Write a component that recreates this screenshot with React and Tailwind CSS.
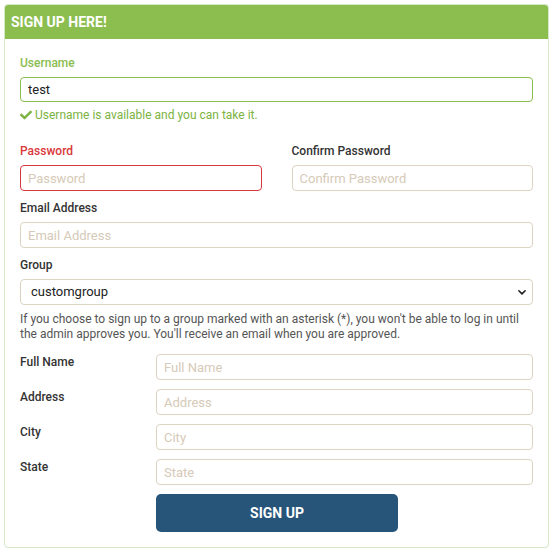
import { useState } from "react";

const font = { fontFamily: "Roboto, 'Liberation Sans', sans-serif" };

function Field({ placeholder, className = "" }) {
  return (
    <input
      type="text"
      placeholder={placeholder}
      className={
        "block w-full h-[26px] rounded-[4px] border border-[#ddd3c3] bg-white px-[7px] text-[13px] text-[#333] placeholder:text-[#d6cab8] outline-none " +
        className
      }
    />
  );
}

function SideRow({ label, placeholder }) {
  return (
    <div className="flex">
      <div className="w-[136px] pt-[1px] text-[12px] font-medium leading-[14px] text-[#333]">
        {label}
      </div>
      <div className="flex-1">
        <Field placeholder={placeholder} />
      </div>
    </div>
  );
}

export default function App() {
  const [username, setUsername] = useState("test");

  return (
    <div className="bg-white p-[4px] pr-[1px]" style={font}>
      <div className="rounded-[4px] border border-[#d3e8c4] bg-white">
        <div className="flex h-[34px] items-center rounded-t-[3px] bg-[#8bbd4f] px-[6px]">
          <span className="text-[14px] font-bold text-white">SIGN UP HERE!</span>
        </div>

        <div className="px-[15px] pt-[17px] pb-[15px]">
          <label className="block text-[12px] font-medium leading-[14px] text-[#8bbd4f]">
            Username
          </label>
          <input
            type="text"
            value={username}
            onChange={(e) => setUsername(e.target.value)}
            className="mt-[7px] block w-full h-[25px] rounded-[4px] border border-[#8bbd4f] bg-white px-[7px] text-[13px] text-[#222] outline-none"
          />
          <div className="mt-[6px] flex items-center text-[12px] leading-[14px] text-[#7cb342]">
            <svg viewBox="0 0 512 512" className="mr-[3px] h-[12px] w-[12px] fill-[#7cb342]">
              <path d="M173.898 439.404l-166.4-166.4c-9.997-9.997-9.997-26.206 0-36.204l36.203-36.204c9.997-9.998 26.207-9.998 36.204 0L192 312.69 432.095 72.596c9.997-9.997 26.207-9.997 36.204 0l36.203 36.204c9.997 9.997 9.997 26.206 0 36.204l-294.4 294.401c-9.998 9.997-26.207 9.997-36.204-.001z" />
            </svg>
            Username is available and you can take it.
          </div>

          <div className="mt-[22px] grid grid-cols-2 gap-x-[30px]">
            <div>
              <label className="block text-[12px] font-medium leading-[14px] text-[#d9383a]">
                Password
              </label>
              <Field
                placeholder="Password"
                className="mt-[7px] !border-[#d9383a]"
              />
            </div>
            <div>
              <label className="block text-[12px] font-medium leading-[14px] text-[#333]">
                Confirm Password
              </label>
              <Field placeholder="Confirm Password" className="mt-[7px]" />
            </div>
          </div>

          <label className="mt-[10px] block text-[12px] font-medium leading-[14px] text-[#333]">
            Email Address
          </label>
          <Field placeholder="Email Address" className="mt-[7px]" />

          <label className="mt-[10px] block text-[12px] font-medium leading-[14px] text-[#333]">
            Group
          </label>
          <div className="relative mt-[7px]">
            <select className="block w-full h-[26px] appearance-none rounded-[4px] border border-[#ddd3c3] bg-white pl-[10px] text-[13px] text-[#222] outline-none">
              <option>customgroup</option>
            </select>
            <svg
              viewBox="0 0 16 16"
              className="pointer-events-none absolute right-[6px] top-[8px] h-[10px] w-[10px]"
              fill="none"
              stroke="#222"
              strokeWidth="2.6"
              strokeLinecap="round"
              strokeLinejoin="round"
            >
              <path d="M3 6l5 5 5-5" />
            </svg>
          </div>
          <p className="mt-[7px] text-[12px] leading-[15px] text-[#555]">
            If you choose to sign up to a group marked with an asterisk (*), you
            won't be able to log in until the admin approves you. You'll receive
            an email when you are approved.
          </p>

          <div className="mt-[12px] flex flex-col gap-[9px]">
            <SideRow label="Full Name" placeholder="Full Name" />
            <SideRow label="Address" placeholder="Address" />
            <SideRow label="City" placeholder="City" />
            <SideRow label="State" placeholder="State" />
          </div>

          <div className="mt-[9px] pl-[136px]">
            <button className="h-[38px] w-[242px] rounded-[5px] bg-[#27557a] text-[14px] font-bold text-white">
              SIGN UP
            </button>
          </div>
        </div>
      </div>
    </div>
  );
}
